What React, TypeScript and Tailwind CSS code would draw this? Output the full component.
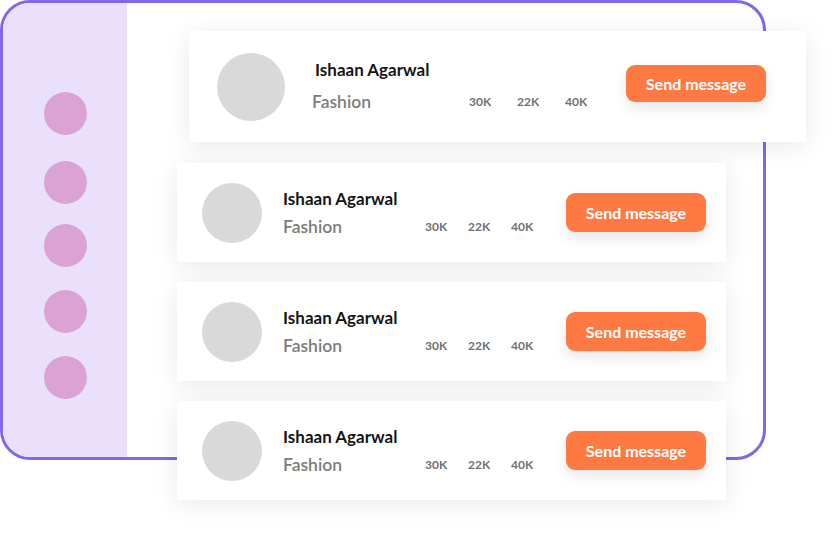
import React from 'react';

type Person = { name: string; category: string; stats: string[] };

const people: Person[] = [
  { name: 'Ishaan Agarwal', category: 'Fashion', stats: ['30K', '22K', '40K'] },
  { name: 'Ishaan Agarwal', category: 'Fashion', stats: ['30K', '22K', '40K'] },
  { name: 'Ishaan Agarwal', category: 'Fashion', stats: ['30K', '22K', '40K'] },
  { name: 'Ishaan Agarwal', category: 'Fashion', stats: ['30K', '22K', '40K'] },
];

const font = { fontFamily: 'Lato, "Open Sans", sans-serif' };

function SendButton({ tall }: { tall?: boolean }) {
  return (
    <button
      className={`ml-auto flex w-[140px] items-center justify-center rounded-[9px] bg-[#ff7a42] text-[16px] font-bold text-white shadow-[0_6px_14px_rgba(0,0,0,0.1)] ${tall ? 'h-[39px]' : 'mb-[6px] h-[37px]'}`}
    >
      Send message
    </button>
  );
}

function FeaturedCard({ p }: { p: Person }) {
  return (
    <div className="ml-[12px] flex h-[111px] w-[617px] items-center bg-white pl-[28px] pr-[40px] shadow-[0_4px_24px_rgba(0,0,0,0.09)]">
      <div className="h-[68px] w-[68px] shrink-0 rounded-full bg-[#d9d9d9]" />
      <div className="ml-[27px] -mt-[2px] flex flex-col">
        <div className="pl-[3px] text-[17px] font-bold leading-[20px] text-[#151515]">{p.name}</div>
        <div className="mt-[12px] flex items-center">
          <div className="w-[157px] text-[17.5px] font-semibold leading-[20px] text-[#7d7d7d]">{p.category}</div>
          {p.stats.map((s, i) => (
            <div key={i} className="w-[48px] text-[12px] font-bold text-[#707070]">
              {s}
            </div>
          ))}
        </div>
      </div>
      <SendButton />
    </div>
  );
}

function Card({ p }: { p: Person }) {
  return (
    <div className="flex h-[99px] w-[549px] items-center bg-white pl-[25px] pr-[20px] shadow-[0_4px_24px_rgba(0,0,0,0.09)]">
      <div className="h-[60px] w-[60px] shrink-0 rounded-full bg-[#d9d9d9]" />
      <div className="ml-[21px] flex flex-col">
        <div className="text-[17px] font-bold leading-[20px] text-[#151515]">{p.name}</div>
        <div className="mt-[8px] flex items-center">
          <div className="w-[142px] text-[17.5px] font-semibold leading-[20px] text-[#7d7d7d]">{p.category}</div>
          {p.stats.map((s, i) => (
            <div key={i} className="w-[43px] text-[12px] font-bold text-[#707070]">
              {s}
            </div>
          ))}
        </div>
      </div>
      <SendButton tall />
    </div>
  );
}

export default function App() {
  return (
    <div className="relative h-[540px] w-[836px] overflow-hidden bg-white" style={font}>
      {/* frame */}
      <div className="flex h-[460px] w-[766px] overflow-hidden rounded-[30px] border-[3px] border-[#8268e8] bg-white">
        <div className="flex w-[124px] flex-col items-center bg-[#eae0fc]">
          <div className="mt-[89px] h-[43px] w-[43px] rounded-full bg-[#dba2d4]" />
          <div className="mt-[26px] h-[43px] w-[43px] rounded-full bg-[#dba2d4]" />
          <div className="mt-[20px] h-[43px] w-[43px] rounded-full bg-[#dba2d4]" />
          <div className="mt-[23px] h-[43px] w-[43px] rounded-full bg-[#dba2d4]" />
          <div className="mt-[23px] h-[43px] w-[43px] rounded-full bg-[#dba2d4]" />
        </div>
      </div>

      {/* cards lying over the frame */}
      <div className="absolute left-[177px] top-[31px] flex flex-col gap-[20px]">
        <div className="mb-px">
          <FeaturedCard p={people[0]} />
        </div>
        {people.slice(1).map((p, i) => (
          <Card key={i} p={p} />
        ))}
      </div>
    </div>
  );
}
